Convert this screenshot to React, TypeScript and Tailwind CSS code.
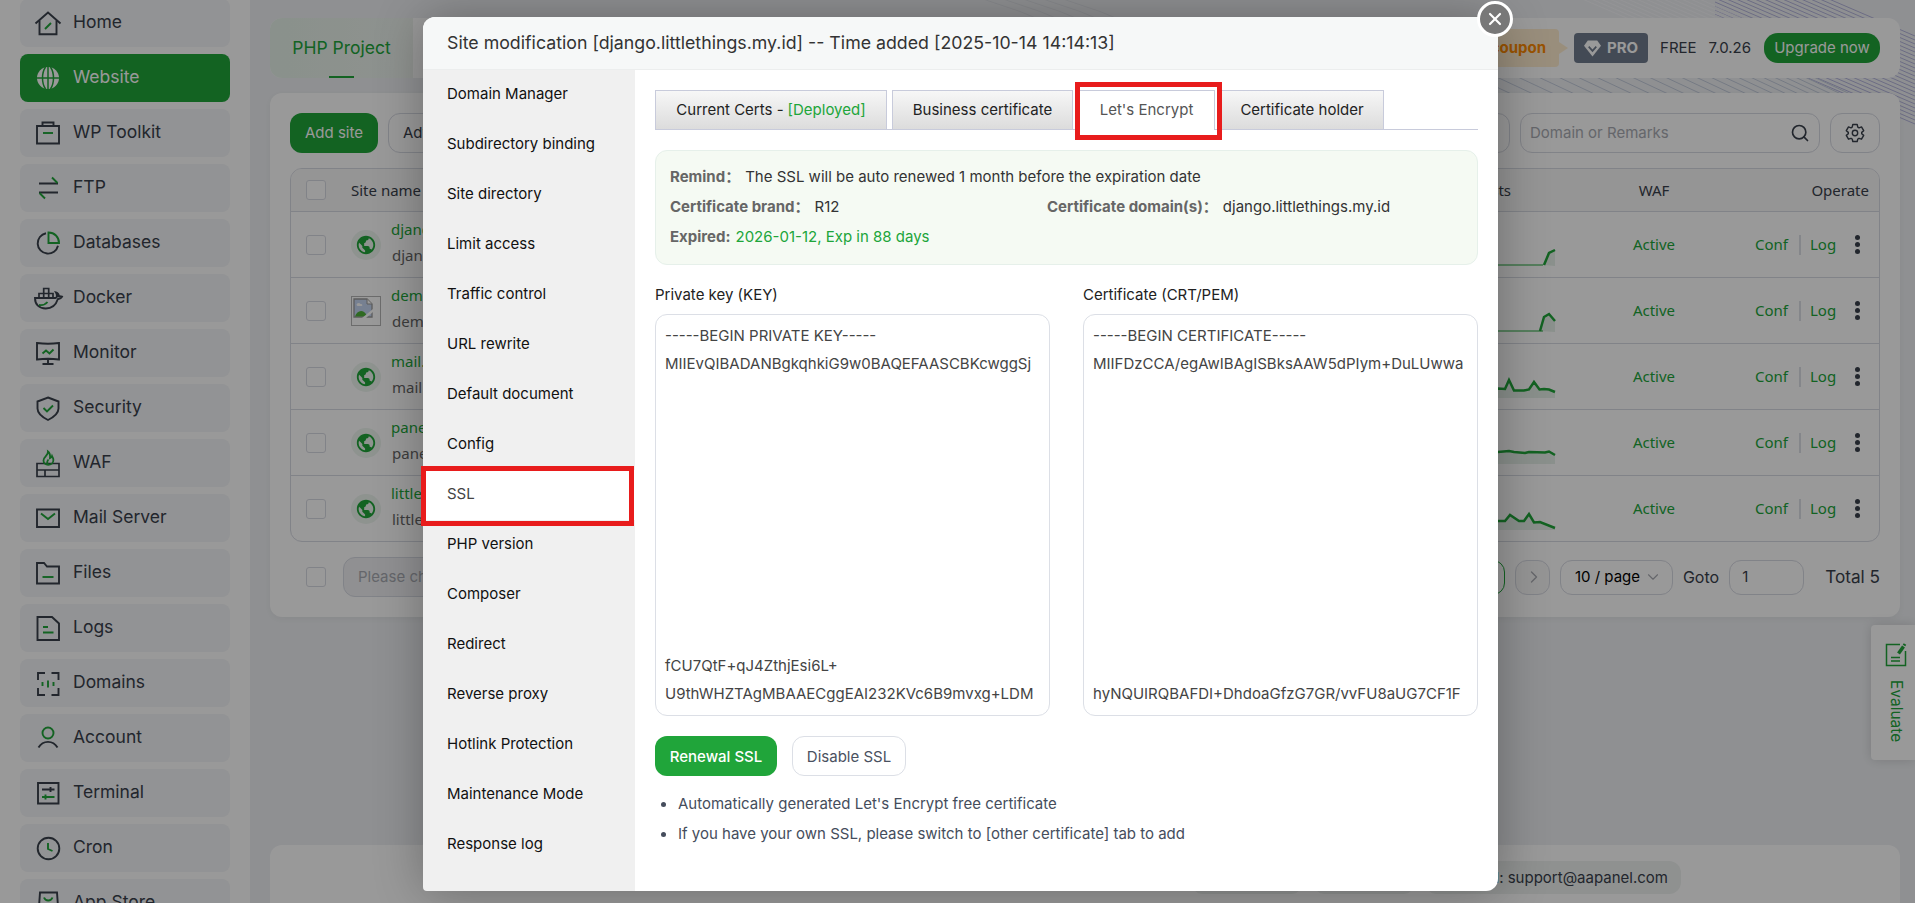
import type { ReactNode } from "react";
import { BiWorld } from "react-icons/bi";
import { ChevronDown, ChevronRight, Search, X } from "lucide-react";

const DARK = "#39404b";
const GREEN = "#20a53a";

type MenuItem = { label: string; icon: ReactNode; active?: boolean };

const menu: MenuItem[] = [
  {
    label: "Home",
    icon: (
      <>
        <path d="M-.5 12.5 12 1.5l12.5 11" />
        <path d="M3.5 9.5v13.7h17V9.5" />
        <path d="m9 18 6-6" stroke={GREEN} />
      </>
    ),
  },
  {
    label: "Website",
    active: true,
    icon: (
      <>
        <circle cx="12" cy="12" r="11" fill="#fff" stroke="none" />
        <path
          d="M1 12h22M9.5 1C5.5 7 5.5 17 9.5 23M14.5 1c4 6 4 16 0 22M12 1v22"
          stroke={GREEN}
          strokeWidth="1.5"
        />
      </>
    ),
  },
  {
    label: "WP Toolkit",
    icon: (
      <>
        <path d="M1 5h22v17.5H1zM6.5 5V1.5h11V5" />
        <path d="M7 12h10" stroke={GREEN} />
      </>
    ),
  },
  {
    label: "FTP",
    icon: (
      <>
        <path d="M3 7.500h19M3 16.500h19" />
        <path d="m16 1.500 5.500 5.500M3.500 17l5.500 5.500" stroke={GREEN} />
      </>
    ),
  },
  {
    label: "Databases",
    icon: (
      <>
        <path d="M10 2.2a10.3 10.3 0 1 0 12 12.5" />
        <path d="M12.5 1.500c6 0 10.500 4.500 10.500 10.500H12.500z" stroke={GREEN} />
      </>
    ),
  },
  {
    label: "Docker",
    icon: (
      <>
        <path d="M-1 12h20.500c1.500 0 2-3 .5-5.500 2 .5 3 2.500 2.700 3.800 1 0 2-.2 3.300.4-1 1.800-2.500 2.300-4.200 2.500-2 6-6 9.300-12 9.300C3 22.500-1 18.500-1 12z" />
        <path d="M3 12V7.500h14V12M7.700 12V2.500h5V12" strokeWidth="1.7" />
        <path d="M3 19c3.500.5 6.500-.5 8.500-3" stroke={GREEN} />
      </>
    ),
  },
  {
    label: "Monitor",
    icon: (
      <>
        <path d="M1 2q11 1.500 22 0v16.500q-11-1.500-22 0zM12 18v5M6.500 23h11" />
        <path d="m6.500 12.500 3.500-3 3.500 3 4-4" stroke={GREEN} />
      </>
    ),
  },
  {
    label: "Security",
    icon: (
      <>
        <path d="m12 1.500 10.500 4v7c0 5-4.500 8.500-10.500 11.500C6 21 1.500 17.500 1.500 12.500v-7z" />
        <path d="m7.500 12 3.500 3.500 6-6" stroke={GREEN} />
      </>
    ),
  },
  {
    label: "WAF",
    icon: (
      <>
        <path d="M1 12.500h22v13H1zM1 19h22M9 19v6.500" strokeWidth="1.7" />
        <path
          d="M12 .5c.5 4-4.500 5-4.500 9 0 2.500 2 4.300 4.700 4.300s5.200-1.800 5.200-4.800c0-2-1-3-1.400-4-.5 1.500-1.200 2-2 2.200C14.300 4.500 14 2 12 .5zM12.200 13.500c-2-2-1-3.500.3-5"
          stroke={GREEN}
          strokeWidth="1.8"
        />
      </>
    ),
  },
  {
    label: "Mail Server",
    icon: (
      <>
        <path d="M1 3.500h22v17.500H1z" />
        <path d="m5 7.500 7 5.500 7-5.500" stroke={GREEN} />
      </>
    ),
  },
  {
    label: "Files",
    icon: (
      <>
        <path d="M1 2h7l3 3.500h12v17H1z" />
        <path d="M6.500 16h11" stroke={GREEN} />
      </>
    ),
  },
  {
    label: "Logs",
    icon: (
      <>
        <path d="M1.500 1H16l7 6.500V24H1.500z" />
        <path d="M7 11h5M7 16.500h10.500" stroke={GREEN} />
      </>
    ),
  },
  {
    label: "Domains",
    icon: (
      <>
        <path d="M9 2H2v7M15.500 2h7v7M9 24H2v-7M15.500 24h7v-7" />
        <path d="M6.500 11v4M12 9.500v7M17.500 11v4" stroke={GREEN} />
      </>
    ),
  },
  {
    label: "Account",
    icon: (
      <>
        <circle cx="12" cy="7" r="5.500" stroke={GREEN} />
        <path d="M2.500 21.500c4.500-7.500 14.500-7.500 19 0" />
      </>
    ),
  },
  {
    label: "Terminal",
    icon: (
      <>
        <path d="M2 2h20.500v20.500H2zM6 8.500h12.500M14.500 6v5" />
        <path d="M6 16h12.500M9.500 13.500v5" stroke={GREEN} />
      </>
    ),
  },
  {
    label: "Cron",
    icon: (
      <>
        <circle cx="12.500" cy="12.500" r="10.800" />
        <path d="M12 7v6l4.500 2" stroke={GREEN} />
      </>
    ),
  },
  {
    label: "App Store",
    icon: (
      <>
        <path d="M4 1.500h17l1.500 21H2.500z" />
        <path d="M8 6.500c1.500 4 7 4 8.500 0" stroke={GREEN} />
      </>
    ),
  },
];

type Site = { name: string; line: string; thin?: boolean; broken?: boolean };

const sites: Site[] = [
  { name: "django.littlethings.my.id", line: "89,31 94,19 100,16", thin: true },
  {
    name: "demo.littlethings.my.id",
    line: "85,31 89,17 94,14 100,21",
    thin: true,
    broken: true,
  },
  {
    name: "mail.littlethings.my.id",
    line: "0,23 43,22.5 50,23 54,14 59,24.5 69,24.5 74,23.5 79,16 84.5,23.5 89,23 94,23.5 100,26",
  },
  {
    name: "panel.littlethings.my.id",
    line: "0,20 43,20 54,19 59,20 70,21 74,20 90,20.5 94,19.5 100,23",
  },
  {
    name: "littlethings.my.id",
    line: "0,23 43,23 50,23 55,17 64,23 69,23 74,16 79,24.5 85,24 100,30",
  },
];

const settings = [
  "Domain Manager",
  "Subdirectory binding",
  "Site directory",
  "Limit access",
  "Traffic control",
  "URL rewrite",
  "Default document",
  "Config",
  "SSL",
  "PHP version",
  "Composer",
  "Redirect",
  "Reverse proxy",
  "Hotlink Protection",
  "Maintenance Mode",
  "Response log",
];

export default function App() {
  return (
    <div className="relative flex h-[903px] w-[1915px] overflow-hidden bg-[#eff1f4] font-['Inter','Noto_Sans_CJK_SC',sans-serif] text-[15px] text-[#39404b]">
      <Sidebar />
      <Waves />

      <main className="relative flex flex-1 flex-col pt-[18px] pr-[15px] pl-5">
        <TopBar />
        <SiteCard />
        <Footer />
      </main>

      <div className="absolute top-[625px] right-0 flex h-[135px] w-[44px] flex-col items-center rounded-l bg-white pt-[18px] pl-[5px] text-[#20a53a] shadow-[0_0_12px_rgba(0,0,0,0.15)]">
        <svg
          viewBox="0 0 22 24"
          className="h-6 w-[22px]"
          fill="none"
          stroke="currentColor"
          strokeWidth="1.5"
        >
          <path d="M15 1.500H1.500v21H20.500V8M6 14.500h9M6 18h9" />
          <path d="m13.500 10.500 5-7" strokeWidth="3.500" />
          <path d="m19 2.500 1-1.500" strokeWidth="3" />
        </svg>
        <span className="mt-[13px] text-[15.5px] leading-5 [writing-mode:vertical-rl]">
          Evaluate
        </span>
      </div>

      <div className="absolute inset-0 bg-black/40" />
      <SiteModal />
    </div>
  );
}

function Sidebar() {
  return (
    <nav className="-mt-px flex w-[250px] shrink-0 flex-col gap-[7px] bg-white px-5">
      {menu.map((item) => (
        <div
          key={item.label}
          className={
            item.active
              ? "flex h-12 shrink-0 items-center gap-[13px] rounded-lg bg-[#20a53a] pl-4 text-white"
              : "flex h-12 shrink-0 items-center gap-[13px] rounded-lg bg-[#f3f5f8] pl-4"
          }
        >
          <svg
            viewBox="0 0 24 24"
            className="h-6 w-6 overflow-visible"
            fill="none"
            stroke={DARK}
            strokeWidth="1.9"
          >
            {item.icon}
          </svg>
          <span className="pb-px text-[17.5px]">{item.label}</span>
        </div>
      ))}
    </nav>
  );
}

// decorative hatching behind the top right corner of the page
function Waves() {
  const rows = Array.from({ length: 23 }, (_, i) => i);

  return (
    <svg
      viewBox="0 0 935 140"
      className="absolute top-0 right-0 h-[140px] w-[935px]"
      fill="none"
      strokeWidth="1"
    >
      {rows.map((i) => (
        <path
          key={`a${i}`}
          d={`M735 ${i * 4 - 50}L935 ${36 + i * 4}`}
          stroke="#b4b4dc"
        />
      ))}
      {rows.map((i) => (
        <path
          key={`b${i}`}
          d={`M${480 + i * 22 - i * i * 0.3} 70l60 28`}
          stroke="#c4ccdc"
        />
      ))}
      {rows.slice(0, 14).map((i) => (
        <path
          key={`c${i}`}
          d={`M${600 + i * 9} -2l56 24`}
          stroke="#fafafc"
          opacity="0.7"
        />
      ))}
      {rows.slice(0, 5).map((i) => (
        <path
          key={`d${i}`}
          d={`M${i * 20} -2q40 12 80 30`}
          stroke="#e2e4ea"
        />
      ))}
    </svg>
  );
}

function TopBar() {
  return (
    <header className="flex h-[60px] shrink-0 items-center overflow-hidden rounded-xl bg-white pr-5">
      <div className="relative flex h-full w-[143px] items-center justify-center bg-gradient-to-r from-[#e6f2e9] to-[#eef3ef] pt-px text-[17.5px] text-[#20a53a]">
        PHP Project
        <span className="absolute bottom-0 left-[59px] h-0.5 w-[25px] bg-[#20a53a]" />
      </div>

      <div className="ml-auto flex items-center">
        <div className="flex h-[38px] w-[150px] items-center justify-end rounded bg-[#ffedcf] pr-[13px] font-bold text-[#ff8a00]">
          Get coupon
        </div>
        <span className="h-0 w-0 border-y-[6px] border-l-[9px] border-y-transparent border-l-[#ffedcf]" />
        <div className="ml-[6px] flex h-[30px] w-[74px] items-center justify-center gap-[6px] rounded bg-[#717c8e] font-bold text-white">
          <svg viewBox="0 0 18 17" className="h-[17px] w-[17px]">
            <path d="M4 0h10l4 5.500L9 17 0 5.500z" fill="#fff" />
            <path
              d="m5 6.500 4 4.500 4-4.500"
              fill="none"
              stroke="#717c8e"
              strokeWidth="1.8"
            />
          </svg>
          PRO
        </div>
        <span className="ml-3">FREE</span>
        <span className="ml-3">7.0.26</span>
        <button
          type="button"
          className="ml-[13px] h-[30px] w-[116px] rounded-[14px] bg-[#20a53a] pt-px text-white"
        >
          Upgrade now
        </button>
      </div>
    </header>
  );
}

function SiteCard() {
  return (
    <section className="mt-[15px] h-[524px] shrink-0 rounded-xl bg-white px-5 pt-5 shadow-[0_2px_8px_rgba(0,0,0,0.05)]">
      <div className="flex h-10">
        <button
          type="button"
          className="w-[88px] rounded-xl bg-[#20a53a] pt-px text-white"
        >
          Add site
        </button>
        <button
          type="button"
          className="ml-[10px] w-[190px] rounded-xl border border-[#d8dae3] pt-px pl-[14px] text-left"
        >
          Advanced setup
        </button>

        <div className="ml-auto flex gap-[10px]">
          <div className="w-[120px] rounded-xl border border-[#d8dae3]" />
          <div className="flex w-[300px] items-center justify-between rounded-xl border border-[#d8dae3] px-[9px] text-[#a8abb2]">
            Domain or Remarks
            <Search className="h-5 w-5 text-[#39404b]" />
          </div>
          <div className="flex w-[50px] items-center justify-center rounded-xl border border-[#d8dae3]">
            <GearIcon />
          </div>
        </div>
      </div>

      <div className="mt-[15px] overflow-hidden rounded-xl border border-[#d8dae3] font-['Noto_Sans',sans-serif] text-[15px]">
        <div className="flex h-[42px] items-center bg-[#f8f8f8] pr-[10px] pl-[15px]">
          <Checkbox />
          <span className="ml-[25px]">Site name</span>
          <span className="mr-[88px] ml-auto">Requests</span>
          <span className="w-[110px] text-center">WAF</span>
          <span className="w-[160px] text-right">Operate</span>
        </div>
        {sites.map((site) => (
          <SiteRow key={site.name} site={site} />
        ))}
      </div>

      <div className="mt-[15px] flex h-10 items-center pl-4">
        <Checkbox />
        <div className="ml-[17px] flex h-10 w-[240px] items-center rounded-xl border border-[#d8dae3] bg-[#f0f1f3] pl-[14px] text-[#a8abb2]">
          Please choose
        </div>

        <div className="ml-auto flex h-[35px] items-center">
          <span className="flex h-full w-[35px] items-center justify-center rounded-xl border border-[#20a53a] text-[#20a53a]">
            1
          </span>
          <span className="ml-[10px] flex h-full w-[35px] items-center justify-center rounded-xl border border-[#d8dae3] bg-[#f8f8f8] pl-[3px]">
            <ChevronRight className="h-5 w-5 text-[#a8abb2]" strokeWidth={1.5} />
          </span>
          <span className="ml-[10px] flex h-full w-[113px] items-center gap-1 rounded-xl border border-[#d8dae3] pl-[14px] text-black">
            10 / page
            <ChevronDown
              className="h-[18px] w-[18px] text-[#a8abb2]"
              strokeWidth={1.5}
            />
          </span>
          <span className="ml-[10px] text-base">Goto</span>
          <span className="ml-[10px] flex h-full w-[75px] items-center rounded-xl border border-[#d8dae3] pl-3">
            1
          </span>
          <span className="ml-[21px] text-[17.2px]">Total 5</span>
        </div>
      </div>
    </section>
  );
}

function SiteRow({ site }: { site: Site }) {
  return (
    <div className="flex h-[66px] items-center border-[#d8dae3] border-t pl-[15px]">
      <Checkbox />
      {site.broken ? (
        <BrokenImage />
      ) : (
        <span className="ml-[25px] flex h-[30px] w-[30px] items-center justify-center rounded-full bg-[#edf5ef]">
          <BiWorld className="h-[22px] w-[22px] text-[#20a53a]" />
        </span>
      )}
      <div className="ml-[10px] pb-[5px] leading-[26px]">
        <div className="text-[#20a53a]">{site.name}</div>
        <div className="pl-px text-[#666]">{site.name}</div>
      </div>

      <svg
        viewBox="0 0 100 32"
        className="mt-[11px] ml-auto h-8 w-[100px] overflow-visible"
        fill="none"
        stroke={GREEN}
      >
        <polygon
          points={`${site.thin ? "" : "0,32 "}${site.line} 100,32`}
          fill="#e6f1e9"
          stroke="none"
        />
        {site.thin && <path d="M0 31h88" />}
        <polyline points={site.line} strokeWidth="2.5" />
      </svg>
      <span className="w-[198px] text-center text-[#20a53a]">Active</span>
      <div className="flex w-[126px] items-center text-[#20a53a]">
        <span className="w-[46px] pl-0.5">Conf</span>
        <span className="h-5 w-0.5 bg-[#dcdfe6]" />
        <span className="w-[54px] pl-[9px]">Log</span>
        <span className="flex flex-col gap-[2.5px]">
          <i className="h-[4.5px] w-[4.5px] rounded-full bg-[#39404b]" />
          <i className="h-[4.5px] w-[4.5px] rounded-full bg-[#39404b]" />
          <i className="h-[4.5px] w-[4.5px] rounded-full bg-[#39404b]" />
        </span>
      </div>
    </div>
  );
}

function Checkbox() {
  return (
    <span className="h-5 w-5 shrink-0 rounded-[3px] border border-[#d8dae3] bg-white" />
  );
}

function BrokenImage() {
  return (
    <span className="ml-[25px] flex h-[30px] w-[30px] border border-[#b4b4b4] p-px">
      <svg viewBox="0 0 20 20" className="h-5 w-5">
        <path
          d="M1 1h13l5 5v13H1z"
          fill="#c5d5f2"
          stroke="#9a9a9a"
          strokeWidth="1.3"
        />
        <path d="M3.500 7c0-2 3-3 4-1 2-.5 2.500 2 1 2h-4z" fill="#fff" />
        <path d="M2 18.500c2-6 8-8 12-1l1 1z" fill="#4fb13a" />
        <path d="M14 1v5h5" fill="#fff" stroke="#9a9a9a" />
        <path d="M9 20 20 11v3l-7 6z" fill="#fff" />
      </svg>
    </span>
  );
}

function GearIcon() {
  return (
    <svg
      viewBox="0 0 20 20"
      className="h-5 w-5"
      fill="none"
      stroke={DARK}
      strokeWidth="1.4"
      strokeLinejoin="round"
    >
      <path d="M7.800 1.500h4.400l.6 2.600 1.200.7 2.500-.9 2.200 3.800-2 1.700v1.300l2 1.700-2.200 3.800-2.500-.9-1.200.7-.6 2.500H7.800l-.6-2.500-1.200-.7-2.500.9-2.200-3.800 2-1.700V9.400l-2-1.700 2.200-3.800 2.500.9 1.200-.7z" />
      <circle cx="10" cy="10" r="2.700" />
    </svg>
  );
}

function Footer() {
  return (
    <footer className="mt-[228px] flex h-[66px] shrink-0 justify-end gap-[10px] rounded-t-xl bg-white pt-4 pr-[219px]">
      <span className="h-[33px] w-[112px] rounded-xl bg-[#eef2f0]" />
      <span className="h-[33px] w-[102px] rounded-xl bg-[#eef2f0]" />
      <span className="flex h-[33px] w-[256px] items-center justify-end rounded-xl bg-[#eef2f0] pt-px pr-[13px]">
        <span className="text-[#2b6cb0]">E-mail</span>
        :&nbsp;support@aapanel.com
      </span>
    </footer>
  );
}

function SiteModal() {
  return (
    <div className="absolute top-[17px] left-[423px] flex h-[874px] w-[1075px] flex-col rounded-xl bg-white shadow-[1px_1px_50px_rgba(0,0,0,0.3)]">
      <div className="flex h-[53px] shrink-0 items-center rounded-t-xl border-[#eceeee] border-b bg-[#f6f8f8] pl-6 text-[#333] text-[17.75px]">
        Site modification [django.littlethings.my.id] -- Time added [2025-10-14
        14:14:13]
      </div>
      <button
        type="button"
        className="absolute -top-4 -right-[15px] flex h-9 w-9 items-center justify-center rounded-full border-[3px] border-white bg-[#787878]"
      >
        <X className="h-5 w-5 text-white" strokeWidth={2.6} />
      </button>

      <div className="flex flex-1">
        <ul className="w-[212px] shrink-0 rounded-bl bg-[#f0f0f0] text-[#111]">
          {settings.map((name) => (
            <li
              key={name}
              className={
                name === "SSL"
                  ? "flex h-[50px] items-center bg-white pb-0.5 pl-6 text-[#444]"
                  : "flex h-[50px] items-center pb-0.5 pl-6"
              }
            >
              {name}
            </li>
          ))}
        </ul>
        <SslPanel />
      </div>

      {/* callouts round the selected menu item and tab */}
      <div className="absolute top-[449px] -left-0.5 h-[60px] w-[213px] border-[5px] border-[#e81c1c]" />
      <div className="absolute top-[65px] left-[652px] h-[58px] w-[147px] border-[5px] border-[#e81c1c]" />
    </div>
  );
}

function SslPanel() {
  return (
    <div className="flex flex-1 flex-col px-5 pt-5 text-[#333]">
      <div className="flex h-10 gap-[5px] border-[#c8cbdb] border-b">
        <Tab className="w-[232px]">
          Current Certs - <span className="text-[#20a53a]">[Deployed]</span>
        </Tab>
        <Tab className="w-[181px]">Business certificate</Tab>
        <div className="flex h-10 w-[137px] items-center justify-center border border-[#c8cbdb] border-b-0 bg-white text-[#555]">
          Let's Encrypt
        </div>
        <Tab className="w-[164px]">Certificate holder</Tab>
      </div>

      <div className="mt-5 h-[115px] rounded-xl border border-[#e6f0ea] bg-[#f5faf3] px-[14px] pt-[11px] leading-[30px]">
        <div className="flex">
          <Label>Remind：</Label>
          The SSL will be auto renewed 1 month before the expiration date
        </div>
        <div className="flex">
          <div className="flex w-[377px]">
            <Label>Certificate brand：</Label>
            R12
          </div>
          <div className="flex">
            <Label>Certificate domain(s)：</Label>
            django.littlethings.my.id
          </div>
        </div>
        <div className="flex">
          <Label>Expired:</Label>
          <span className="text-[#20a53a]">2026-01-12, Exp in 88 days</span>
        </div>
      </div>

      <div className="mt-[19px] flex justify-between">
        <div>
          <div className="h-[30px] text-[#222] leading-[22px]">
            Private key (KEY)
          </div>
          <KeyBox
            head={[
              "-----BEGIN PRIVATE KEY-----",
              "MIIEvQIBADANBgkqhkiG9w0BAQEFAASCBKcwggSj",
            ]}
            tail={[
              "fCU7QtF+qJ4ZthjEsi6L+",
              "U9thWHZTAgMBAAECggEAI232KVc6B9mvxg+LDM",
            ]}
          />
        </div>
        <div>
          <div className="h-[30px] text-[#222] leading-[22px]">
            Certificate (CRT/PEM)
          </div>
          <KeyBox
            head={[
              "-----BEGIN CERTIFICATE-----",
              "MIIFDzCCA/egAwIBAgISBksAAW5dPIym+DuLUwwa",
            ]}
            tail={["hyNQUIRQBAFDI+DhdoaGfzG7GR/vvFU8aUG7CF1F"]}
          />
        </div>
      </div>

      <div className="mt-5 flex h-10 gap-[15px]">
        <button
          type="button"
          className="w-[122px] rounded-xl bg-[#20a53a] pt-0.5 font-medium text-white"
        >
          Renewal SSL
        </button>
        <button
          type="button"
          className="w-[114px] rounded-xl border border-[#dcdfe6] pt-0.5 text-[#4a5160]"
        >
          Disable SSL
        </button>
      </div>

      <ul className="mt-[13px] text-[#454d5c] leading-[30px]">
        <Note>Automatically generated Let's Encrypt free certificate</Note>
        <Note>
          If you have your own SSL, please switch to [other certificate] tab to
          add
        </Note>
      </ul>
    </div>
  );
}

function Tab({
  className,
  children,
}: {
  className: string;
  children: ReactNode;
}) {
  return (
    <div
      className={`${className} flex h-[39px] items-center justify-center gap-1 border border-[#c8cbdb] border-b-0 bg-gradient-to-b from-[#f7f7f7] to-[#dcdcdc] text-[#222]`}
    >
      {children}
    </div>
  );
}

function Label({ children }: { children: ReactNode }) {
  return <span className="mr-[5px] font-bold text-[#666]">{children}</span>;
}

function KeyBox({ head, tail }: { head: string[]; tail: string[] }) {
  return (
    <div className="flex h-[402px] w-[395px] flex-col justify-between overflow-hidden rounded-xl border border-[#dcdfe6] px-[9px] pt-[7px] pb-2 text-[#444] leading-[27.5px]">
      <div>
        {head.map((line) => (
          <div key={line}>{line}</div>
        ))}
      </div>
      <div>
        {tail.map((line) => (
          <div key={line}>{line}</div>
        ))}
      </div>
    </div>
  );
}

function Note({ children }: { children: ReactNode }) {
  return (
    <li className="flex items-center gap-[12px] pl-[6px]">
      <span className="h-[5px] w-[5px] rounded-full bg-[#454d5c]" />
      {children}
    </li>
  );
}
